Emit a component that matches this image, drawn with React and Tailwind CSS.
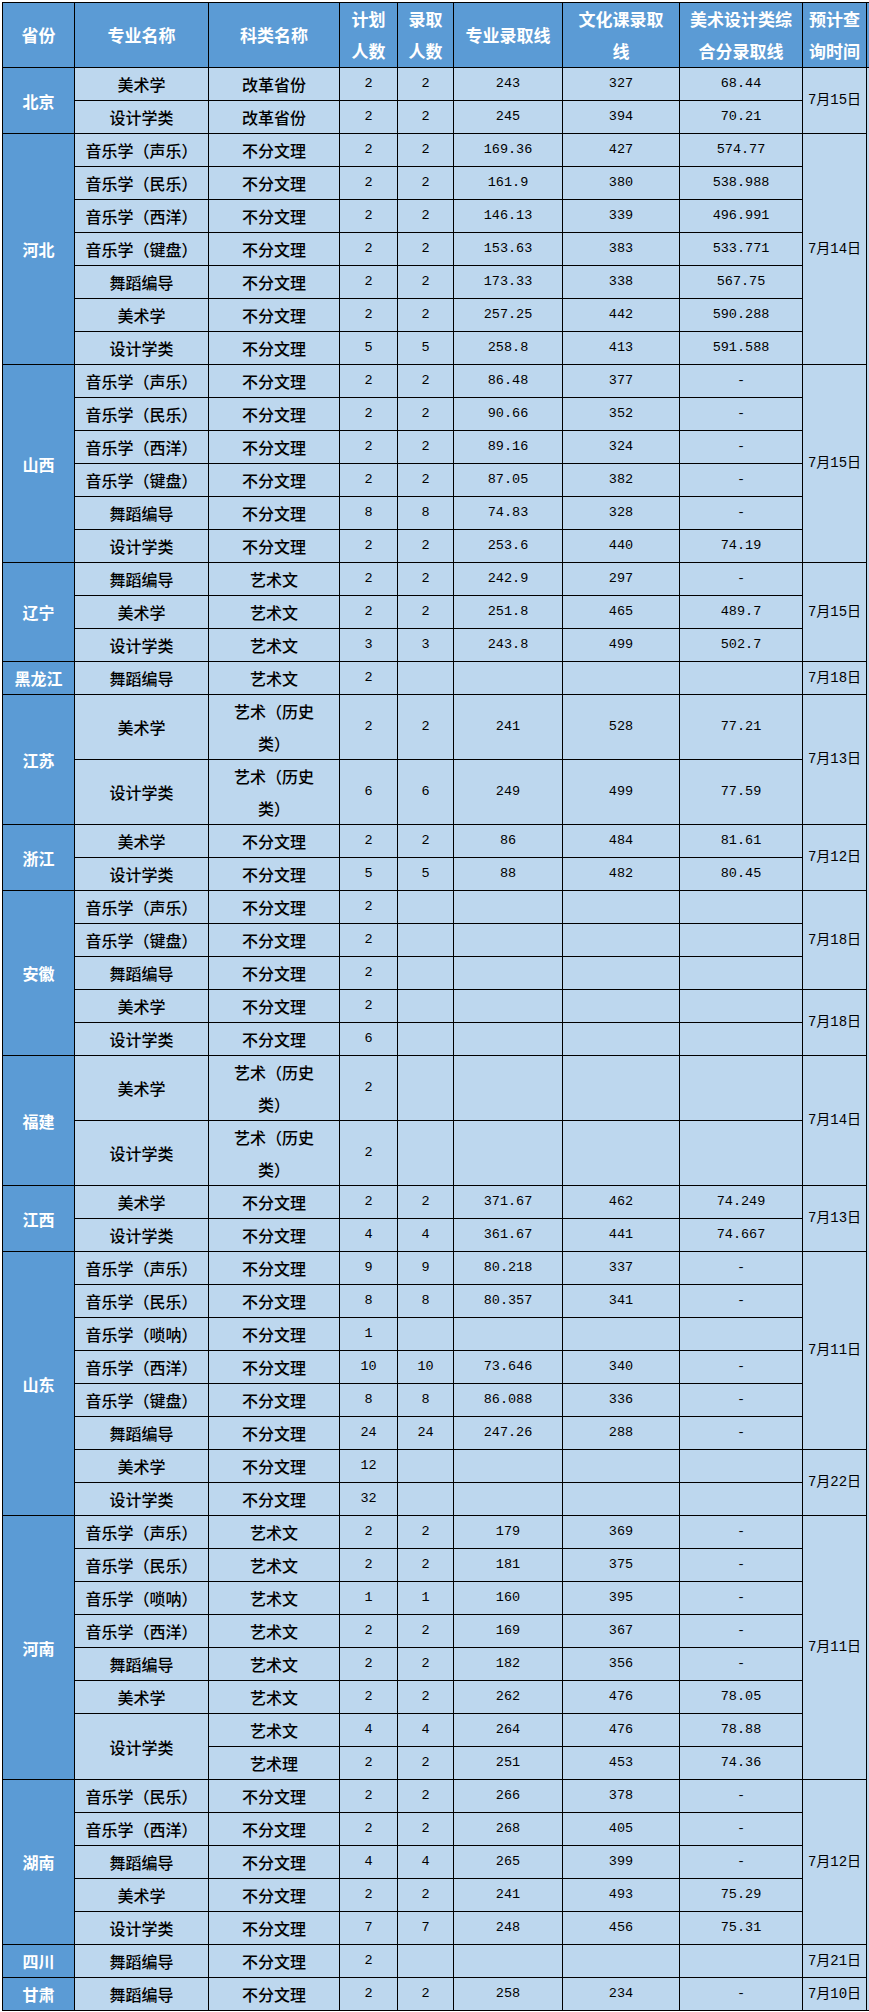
import React from "react";

const KY = "艺术（历史\n类）";

// prov / major / date carry [text, rowSpan]; rows without them are covered by a span above
const rows = [
  { prov: ["北京", 2], major: ["美术学", 1], kind: "改革省份", plan: "2", admit: "2", pro: "243", cul: "327", comp: "68.44", date: ["7月15日", 2] },
  { major: ["设计学类", 1], kind: "改革省份", plan: "2", admit: "2", pro: "245", cul: "394", comp: "70.21" },

  { prov: ["河北", 7], major: ["音乐学（声乐）", 1], kind: "不分文理", plan: "2", admit: "2", pro: "169.36", cul: "427", comp: "574.77", date: ["7月14日", 7] },
  { major: ["音乐学（民乐）", 1], kind: "不分文理", plan: "2", admit: "2", pro: "161.9", cul: "380", comp: "538.988" },
  { major: ["音乐学（西洋）", 1], kind: "不分文理", plan: "2", admit: "2", pro: "146.13", cul: "339", comp: "496.991" },
  { major: ["音乐学（键盘）", 1], kind: "不分文理", plan: "2", admit: "2", pro: "153.63", cul: "383", comp: "533.771" },
  { major: ["舞蹈编导", 1], kind: "不分文理", plan: "2", admit: "2", pro: "173.33", cul: "338", comp: "567.75" },
  { major: ["美术学", 1], kind: "不分文理", plan: "2", admit: "2", pro: "257.25", cul: "442", comp: "590.288" },
  { major: ["设计学类", 1], kind: "不分文理", plan: "5", admit: "5", pro: "258.8", cul: "413", comp: "591.588" },

  { prov: ["山西", 6], major: ["音乐学（声乐）", 1], kind: "不分文理", plan: "2", admit: "2", pro: "86.48", cul: "377", comp: "-", date: ["7月15日", 6] },
  { major: ["音乐学（民乐）", 1], kind: "不分文理", plan: "2", admit: "2", pro: "90.66", cul: "352", comp: "-" },
  { major: ["音乐学（西洋）", 1], kind: "不分文理", plan: "2", admit: "2", pro: "89.16", cul: "324", comp: "-" },
  { major: ["音乐学（键盘）", 1], kind: "不分文理", plan: "2", admit: "2", pro: "87.05", cul: "382", comp: "-" },
  { major: ["舞蹈编导", 1], kind: "不分文理", plan: "8", admit: "8", pro: "74.83", cul: "328", comp: "-" },
  { major: ["设计学类", 1], kind: "不分文理", plan: "2", admit: "2", pro: "253.6", cul: "440", comp: "74.19" },

  { prov: ["辽宁", 3], major: ["舞蹈编导", 1], kind: "艺术文", plan: "2", admit: "2", pro: "242.9", cul: "297", comp: "-", date: ["7月15日", 3] },
  { major: ["美术学", 1], kind: "艺术文", plan: "2", admit: "2", pro: "251.8", cul: "465", comp: "489.7" },
  { major: ["设计学类", 1], kind: "艺术文", plan: "3", admit: "3", pro: "243.8", cul: "499", comp: "502.7" },

  { prov: ["黑龙江", 1], major: ["舞蹈编导", 1], kind: "艺术文", plan: "2", admit: "", pro: "", cul: "", comp: "", date: ["7月18日", 1] },

  { prov: ["江苏", 2], major: ["美术学", 1], kind: KY, plan: "2", admit: "2", pro: "241", cul: "528", comp: "77.21", date: ["7月13日", 2], tall: true },
  { major: ["设计学类", 1], kind: KY, plan: "6", admit: "6", pro: "249", cul: "499", comp: "77.59", tall: true },

  { prov: ["浙江", 2], major: ["美术学", 1], kind: "不分文理", plan: "2", admit: "2", pro: "86", cul: "484", comp: "81.61", date: ["7月12日", 2] },
  { major: ["设计学类", 1], kind: "不分文理", plan: "5", admit: "5", pro: "88", cul: "482", comp: "80.45" },

  { prov: ["安徽", 5], major: ["音乐学（声乐）", 1], kind: "不分文理", plan: "2", admit: "", pro: "", cul: "", comp: "", date: ["7月18日", 3] },
  { major: ["音乐学（键盘）", 1], kind: "不分文理", plan: "2", admit: "", pro: "", cul: "", comp: "" },
  { major: ["舞蹈编导", 1], kind: "不分文理", plan: "2", admit: "", pro: "", cul: "", comp: "" },
  { major: ["美术学", 1], kind: "不分文理", plan: "2", admit: "", pro: "", cul: "", comp: "", date: ["7月18日", 2] },
  { major: ["设计学类", 1], kind: "不分文理", plan: "6", admit: "", pro: "", cul: "", comp: "" },

  { prov: ["福建", 2], major: ["美术学", 1], kind: KY, plan: "2", admit: "", pro: "", cul: "", comp: "", date: ["7月14日", 2], tall: true },
  { major: ["设计学类", 1], kind: KY, plan: "2", admit: "", pro: "", cul: "", comp: "", tall: true },

  { prov: ["江西", 2], major: ["美术学", 1], kind: "不分文理", plan: "2", admit: "2", pro: "371.67", cul: "462", comp: "74.249", date: ["7月13日", 2] },
  { major: ["设计学类", 1], kind: "不分文理", plan: "4", admit: "4", pro: "361.67", cul: "441", comp: "74.667" },

  { prov: ["山东", 8], major: ["音乐学（声乐）", 1], kind: "不分文理", plan: "9", admit: "9", pro: "80.218", cul: "337", comp: "-", date: ["7月11日", 6] },
  { major: ["音乐学（民乐）", 1], kind: "不分文理", plan: "8", admit: "8", pro: "80.357", cul: "341", comp: "-" },
  { major: ["音乐学（唢呐）", 1], kind: "不分文理", plan: "1", admit: "", pro: "", cul: "", comp: "" },
  { major: ["音乐学（西洋）", 1], kind: "不分文理", plan: "10", admit: "10", pro: "73.646", cul: "340", comp: "-" },
  { major: ["音乐学（键盘）", 1], kind: "不分文理", plan: "8", admit: "8", pro: "86.088", cul: "336", comp: "-" },
  { major: ["舞蹈编导", 1], kind: "不分文理", plan: "24", admit: "24", pro: "247.26", cul: "288", comp: "-" },
  { major: ["美术学", 1], kind: "不分文理", plan: "12", admit: "", pro: "", cul: "", comp: "", date: ["7月22日", 2] },
  { major: ["设计学类", 1], kind: "不分文理", plan: "32", admit: "", pro: "", cul: "", comp: "" },

  { prov: ["河南", 8], major: ["音乐学（声乐）", 1], kind: "艺术文", plan: "2", admit: "2", pro: "179", cul: "369", comp: "-", date: ["7月11日", 8] },
  { major: ["音乐学（民乐）", 1], kind: "艺术文", plan: "2", admit: "2", pro: "181", cul: "375", comp: "-" },
  { major: ["音乐学（唢呐）", 1], kind: "艺术文", plan: "1", admit: "1", pro: "160", cul: "395", comp: "-" },
  { major: ["音乐学（西洋）", 1], kind: "艺术文", plan: "2", admit: "2", pro: "169", cul: "367", comp: "-" },
  { major: ["舞蹈编导", 1], kind: "艺术文", plan: "2", admit: "2", pro: "182", cul: "356", comp: "-" },
  { major: ["美术学", 1], kind: "艺术文", plan: "2", admit: "2", pro: "262", cul: "476", comp: "78.05" },
  { major: ["设计学类", 2], kind: "艺术文", plan: "4", admit: "4", pro: "264", cul: "476", comp: "78.88" },
  { kind: "艺术理", plan: "2", admit: "2", pro: "251", cul: "453", comp: "74.36" },

  { prov: ["湖南", 5], major: ["音乐学（民乐）", 1], kind: "不分文理", plan: "2", admit: "2", pro: "266", cul: "378", comp: "-", date: ["7月12日", 5] },
  { major: ["音乐学（西洋）", 1], kind: "不分文理", plan: "2", admit: "2", pro: "268", cul: "405", comp: "-" },
  { major: ["舞蹈编导", 1], kind: "不分文理", plan: "4", admit: "4", pro: "265", cul: "399", comp: "-" },
  { major: ["美术学", 1], kind: "不分文理", plan: "2", admit: "2", pro: "241", cul: "493", comp: "75.29" },
  { major: ["设计学类", 1], kind: "不分文理", plan: "7", admit: "7", pro: "248", cul: "456", comp: "75.31" },

  { prov: ["四川", 1], major: ["舞蹈编导", 1], kind: "不分文理", plan: "2", admit: "", pro: "", cul: "", comp: "", date: ["7月21日", 1] },
  { prov: ["甘肃", 1], major: ["舞蹈编导", 1], kind: "不分文理", plan: "2", admit: "2", pro: "258", cul: "234", comp: "-", date: ["7月10日", 1] },
];

const headers = [
  "省份",
  "专业名称",
  "科类名称",
  "计划\n人数",
  "录取\n人数",
  "专业录取线",
  "文化课录取\n线",
  "美术设计类综\n合分录取线",
  "预计查\n询时间",
  "",
];

const cols = [
  "w-[72px]",
  "w-[134px]",
  "w-[131px]",
  "w-[58px]",
  "w-[56px]",
  "w-[109px]",
  "w-[117px]",
  "w-[123px]",
  "w-[64px]",
  "w-[60px]",
];

function Lines({ text }) {
  const parts = text.split("\n");
  return parts.map((p, i) => (
    <React.Fragment key={i}>
      {p}
      {i < parts.length - 1 && <br />}
    </React.Fragment>
  ));
}

const cell = "border border-black p-0 text-center align-middle";
const body = `${cell} bg-[#bdd7ee] text-black`;
const txt = `${body} text-[16px] leading-[32px] font-medium`;
const num = `${body} text-[13.5px] font-['Liberation_Mono','Noto_Sans_CJK_SC',monospace]`;
const date = `${body} text-[14px] font-['Liberation_Mono','Noto_Sans_CJK_SC',monospace]`;

export default function App() {
  return (
    <div className="w-[869px] h-[2012px] overflow-hidden bg-white">
      <table className="ml-[2px] mt-[2px] w-[924px] table-fixed border-collapse font-['Noto_Sans_CJK_SC',sans-serif]">
        <colgroup>
          {cols.map((c, i) => (
            <col key={i} className={c} />
          ))}
        </colgroup>
        <thead>
          <tr className="h-[65px]">
            {headers.map((h, i) => (
              <th
                key={i}
                className={`${cell} bg-[#5b9bd5] text-white font-bold text-[17px] leading-[32px] ${i === 9 ? "border-r-0" : ""}`}
              >
                <Lines text={h} />
              </th>
            ))}
          </tr>
        </thead>
        <tbody>
          {rows.map((r, i) => (
            <tr key={i} className={r.tall ? "h-[65px]" : "h-[33px]"}>
              {r.prov && (
                <td
                  rowSpan={r.prov[1]}
                  className={`${cell} bg-[#5b9bd5] text-white font-bold text-[16px]`}
                >
                  {r.prov[0]}
                </td>
              )}
              {r.major && (
                <td rowSpan={r.major[1]} className={txt}>
                  {r.major[0]}
                </td>
              )}
              <td className={txt}>
                <Lines text={r.kind} />
              </td>
              <td className={num}>{r.plan}</td>
              <td className={num}>{r.admit}</td>
              <td className={num}>{r.pro}</td>
              <td className={num}>{r.cul}</td>
              <td className={num}>{r.comp}</td>
              {r.date && (
                <td rowSpan={r.date[1]} className={date}>
                  {r.date[0]}
                </td>
              )}
              {i === 0 && (
                <td rowSpan={rows.length} className={`${body} border-r-0`} />
              )}
            </tr>
          ))}
        </tbody>
      </table>
    </div>
  );
}
